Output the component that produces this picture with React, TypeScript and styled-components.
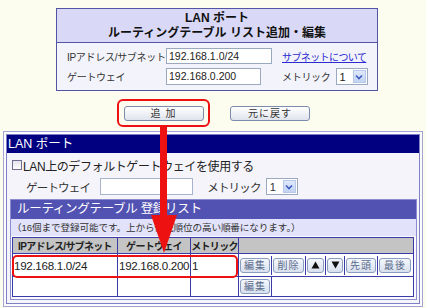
import styled, { createGlobalStyle } from "styled-components";

const Global = createGlobalStyle`
  * { box-sizing: border-box; }
  body {
    margin: 0;
    background: #fdfdef;
    font-family: "Liberation Sans", "Noto Sans CJK JP", sans-serif;
    color: #222;
  }
`;

const Page = styled.div`
  position: relative;
  width: 426px;
  height: 308px;
  padding-top: 8px;
  overflow: hidden;
`;

// top edit panel
const EditPanel = styled.div`
  margin-left: 56px;
  width: 322px;
  border: 1px solid #5454a4;
`;

const EditHead = styled.div`
  height: 34px;
  background: #d9d9f7;
  border-bottom: 1px solid #5454a4;
  text-align: center;
  font-weight: bold;
  font-size: 12px;
  line-height: 15px;
  padding-top: 2px;
  color: #111;
`;

const EditBody = styled.div`
  background: #f3f3fb;
  padding: 5px 6px 5px 10px;
  display: grid;
  grid-template-columns: 99px 116px auto;
  row-gap: 4px;
  align-items: center;
`;

const Label = styled.span`
  font-size: 10px;
  letter-spacing: -0.3px;
  color: #333;
  white-space: nowrap;
`;

const TextBox = styled.div<{ $w: number; $h: number }>`
  width: ${(p) => p.$w}px;
  height: ${(p) => p.$h}px;
  border: 1px solid #9aa8c0;
  background: #fff;
  font-size: 10.5px;
  line-height: 14px;
  padding-left: 2px;
  color: #222;
`;

const Link = styled.a`
  font-size: 10px;
  letter-spacing: -0.6px;
  color: #2a2ad0;
  text-decoration: underline;
  white-space: nowrap;
`;

const MetricWrap = styled.div`
  display: flex;
  align-items: center;
`;

const SelectBox = styled.div<{ $gap: number }>`
  margin-left: ${(p) => p.$gap}px;
  width: 32px;
  height: 17px;
  border: 1px solid #9aa8c0;
  background: #fff;
  display: flex;
  align-items: center;
  justify-content: space-between;
  padding: 1px 1px 1px 3px;
  font-size: 11px;
`;

const SelectArrow = styled.span`
  width: 13px;
  height: 13px;
  background: linear-gradient(#dfe8fb, #c3d3f3);
  border: 1px solid #b8c8e8;
  display: flex;
  align-items: center;
  justify-content: center;
`;

// action buttons
const ActionRow = styled.div`
  display: flex;
  align-items: center;
  margin-top: 8px;
`;

const Highlight = styled.div`
  margin-left: 117px;
  width: 93px;
  height: 28px;
  border: 2px solid #ee1111;
  border-radius: 6px;
  display: flex;
  align-items: center;
  justify-content: center;
`;

const WideButton = styled.button<{ $ml?: number }>`
  margin-left: ${(p) => p.$ml ?? 0}px;
  width: 80px;
  height: 15px;
  padding: 0;
  border: 1px solid #7d8cab;
  border-radius: 3px;
  background: linear-gradient(#ffffff, #dfe3ec);
  font-family: "Liberation Sans", "Noto Sans CJK JP", sans-serif;
  font-size: 10px;
  line-height: 13px;
  color: #333;
  letter-spacing: 1px;
`;

// LAN port panel
const PortPanel = styled.div`
  margin-top: 4px;
  margin-left: 3px;
  width: 420px;
  border: 1px solid #a4a4d4;
  padding: 2px;
  background: #fbfbff;
`;

const PortInner = styled.div`
  border: 1px solid #8080c4;
  background: #f4f4fa;
`;

const PortHead = styled.div`
  height: 18px;
  background: #000080;
  color: #fff;
  font-size: 12.5px;
  line-height: 18px;
  padding-left: 1px;
`;

const PortBody = styled.div`
  padding: 3px 2px 3px 3px;
`;

const CheckRow = styled.div`
  display: flex;
  align-items: center;
  height: 18px;
  padding-left: 2px;
  font-size: 12px;
  letter-spacing: -0.4px;
  color: #222;
`;

const CheckMark = styled.span`
  width: 10px;
  height: 10px;
  border: 1px solid #6e6e8e;
  background: linear-gradient(#e4e4ec, #fff);
  margin-right: 1px;
`;

const GwRow = styled.div`
  display: flex;
  align-items: center;
  height: 17px;
  margin-top: 4px;
  padding-left: 16px;
  font-size: 11.5px;
  letter-spacing: -0.8px;
  color: #333;
`;

const GwInput = styled.div`
  margin-left: 10px;
  width: 93px;
  height: 17px;
  border: 1px solid #a8b4cc;
  background: #fff;
`;

const GwMetric = styled.span`
  margin-left: 14px;
`;

const RouteBox = styled.div`
  margin-top: 4px;
  border: 1px solid #8c8cd0;
  padding-bottom: 2px;
  background: #fbfbff;
`;

const RouteHead = styled.div`
  height: 19px;
  background: #5252b2;
  color: #fff;
  font-size: 12.5px;
  line-height: 19px;
  padding-left: 6px;
  letter-spacing: -0.3px;
`;

const RouteNote = styled.div`
  height: 17px;
  background: #e2e2fa;
  font-size: 9.6px;
  line-height: 17px;
  padding-left: 1px;
  color: #333;
  letter-spacing: -0.1px;
  white-space: nowrap;
`;

const Table = styled.table`
  margin: 1px 2px 0 1px;
  width: 402px;
  table-layout: fixed;
  border-collapse: collapse;
  border: 1px solid #3a3aa8;
  background: #fff;
`;

const Th = styled.th`
  height: 15px;
  background: #c4c4c4;
  border: 1px solid #3a3aa8;
  font-size: 10px;
  font-weight: bold;
  text-align: center;
  padding: 0;
  color: #222;
  white-space: nowrap;
  letter-spacing: -0.7px;
`;

const Td = styled.td<{ $h?: number }>`
  height: ${(p) => p.$h ?? 19}px;
  border: 1px solid #3a3aa8;
  font-size: 11.6px;
  padding: 0 1px;
  white-space: nowrap;
  overflow: hidden;
  color: #222;
  letter-spacing: -0.3px;
`;

const ActCell = styled.td`
  border: 1px solid #3a3aa8;
  padding: 0;
`;

const BtnStrip = styled.div`
  display: flex;
`;

const BtnSlot = styled.div<{ $last?: boolean }>`
  display: flex;
  align-items: center;
  padding: 2px 1px;
  border-right: ${(p) => (p.$last ? "none" : "1px solid #3a3aa8")};
`;

const SmallButton = styled.button<{ $w: number }>`
  width: ${(p) => p.$w}px;
  height: 15px;
  padding: 0;
  border: 1px solid #8a9cc0;
  border-radius: 3px;
  background: linear-gradient(#f4f7fc, #d8e0ee);
  font-family: "Liberation Sans", "Noto Sans CJK JP", sans-serif;
  font-size: 10px;
  line-height: 13px;
  color: #5a6a8a;
  letter-spacing: 1px;
  display: flex;
  align-items: center;
  justify-content: center;
`;

const RowMark = styled.div`
  position: absolute;
  left: 12px;
  top: 255px;
  width: 226px;
  height: 23px;
  border: 2px solid #ee1111;
  border-radius: 5px;
  pointer-events: none;
`;

const Arrow = styled.svg`
  position: absolute;
  left: 150px;
  top: 127px;
  pointer-events: none;
`;

const Chevron = () => (
  <svg width="8" height="6" viewBox="0 0 8 6">
    <path d="M1 1.5 L4 4.5 L7 1.5" stroke="#3c5cc0" strokeWidth="1.6" fill="none" />
  </svg>
);

const Tri = ({ up }: { up?: boolean }) => (
  <svg width="9" height="8" viewBox="0 0 9 8">
    <path d={up ? "M0.5 7.5 L4.5 0.5 L8.5 7.5 Z" : "M0.5 0.5 L4.5 7.5 L8.5 0.5 Z"} fill="#111" />
  </svg>
);

function Select({ gap }: { gap: number }) {
  return (
    <SelectBox $gap={gap}>
      1
      <SelectArrow>
        <Chevron />
      </SelectArrow>
    </SelectBox>
  );
}

export default function App() {
  return (
    <Page>
      <Global />
      <EditPanel>
        <EditHead>
          LAN ポート
          <br />
          ルーティングテーブル リスト追加・編集
        </EditHead>
        <EditBody>
          <Label>IPアドレス/サブネット</Label>
          <TextBox $w={106} $h={16}>192.168.1.0/24</TextBox>
          <Link>サブネットについて</Link>
          <Label>ゲートウェイ</Label>
          <TextBox $w={95} $h={17}>192.168.0.200</TextBox>
          <MetricWrap>
            <Label>メトリック</Label>
            <Select gap={5} />
          </MetricWrap>
        </EditBody>
      </EditPanel>

      <ActionRow>
        <Highlight>
          <WideButton>追 加</WideButton>
        </Highlight>
        <WideButton $ml={20}>元に戻す</WideButton>
      </ActionRow>

      <PortPanel>
        <PortInner>
          <PortHead>LAN ポート</PortHead>
          <PortBody>
            <CheckRow>
              <CheckMark />
              LAN上のデフォルトゲートウェイを使用する
            </CheckRow>
            <GwRow>
              ゲートウェイ
              <GwInput />
              <GwMetric>メトリック</GwMetric>
              <Select gap={5} />
            </GwRow>
            <RouteBox>
              <RouteHead>ルーティングテーブル 登録リスト</RouteHead>
              <RouteNote>（16個まで登録可能です。上から優先順位の高い順番になります。）</RouteNote>
              <Table>
                <colgroup>
                  <col style={{ width: 105 }} />
                  <col style={{ width: 73 }} />
                  <col style={{ width: 48 }} />
                  <col />
                </colgroup>
                <thead>
                  <tr>
                    <Th>IPアドレス/サブネット</Th>
                    <Th>ゲートウェイ</Th>
                    <Th>メトリック</Th>
                    <Th />
                  </tr>
                </thead>
                <tbody>
                  <tr>
                    <Td $h={23}>192.168.1.0/24</Td>
                    <Td $h={23}>192.168.0.200</Td>
                    <Td $h={23}>1</Td>
                    <ActCell>
                      <BtnStrip>
                        <BtnSlot><SmallButton $w={30}>編集</SmallButton></BtnSlot>
                        <BtnSlot><SmallButton $w={31}>削除</SmallButton></BtnSlot>
                        <BtnSlot><SmallButton $w={17}><Tri up /></SmallButton></BtnSlot>
                        <BtnSlot><SmallButton $w={16}><Tri /></SmallButton></BtnSlot>
                        <BtnSlot><SmallButton $w={30}>先頭</SmallButton></BtnSlot>
                        <BtnSlot $last><SmallButton $w={32}>最後</SmallButton></BtnSlot>
                      </BtnStrip>
                    </ActCell>
                  </tr>
                  <tr>
                    <Td $h={19} />
                    <Td $h={19} />
                    <Td $h={19} />
                    <ActCell>
                      <BtnStrip>
                        <BtnSlot><SmallButton $w={30}>編集</SmallButton></BtnSlot>
                      </BtnStrip>
                    </ActCell>
                  </tr>
                </tbody>
              </Table>
            </RouteBox>
          </PortBody>
        </PortInner>
      </PortPanel>

      <RowMark />
      <Arrow width="30" height="127" viewBox="0 0 30 127">
        <rect x="10" y="0" width="7" height="92" fill="#ee1111" />
        <path d="M1 88 L27 88 L14 126 Z" fill="#ee1111" />
      </Arrow>
    </Page>
  );
}
